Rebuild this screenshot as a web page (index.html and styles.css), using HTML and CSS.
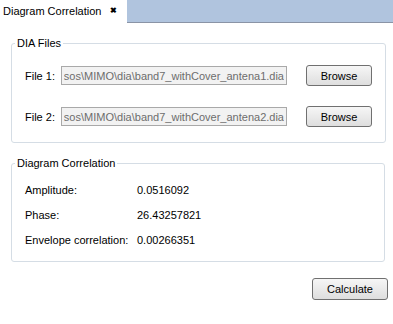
FILE: index.html
```html
<!DOCTYPE html>
<html lang="en">
<head>
    <meta charset="UTF-8">
    <title>Diagram Correlation</title>
    <link rel="stylesheet" href="styles.css">
</head>
<body>
    <div class="tabbar">
        <div class="tab active">
            <span class="tab-title">Diagram Correlation</span>
            <span class="tab-close">&#x2716;</span>
        </div>
        <div class="tab-fill"></div>
    </div>

    <div class="content">
        <fieldset class="group files">
            <legend>DIA Files</legend>
            <div class="file-row">
                <label for="file1">File 1:</label>
                <input type="text" id="file1" value="sos\MIMO\dia\band7_withCover_antena1.dia" disabled>
                <button class="btn">Browse</button>
            </div>
            <div class="file-row">
                <label for="file2">File 2:</label>
                <input type="text" id="file2" value="sos\MIMO\dia\band7_withCover_antena2.dia" disabled>
                <button class="btn">Browse</button>
            </div>
        </fieldset>

        <fieldset class="group results">
            <legend>Diagram Correlation</legend>
            <div class="result-row">
                <span class="result-label">Amplitude:</span>
                <span class="result-value">0.0516092</span>
            </div>
            <div class="result-row">
                <span class="result-label">Phase:</span>
                <span class="result-value">26.43257821</span>
            </div>
            <div class="result-row">
                <span class="result-label">Envelope correlation:</span>
                <span class="result-value">0.00266351</span>
            </div>
        </fieldset>

        <div class="actions">
            <button class="btn calc">Calculate</button>
        </div>
    </div>
</body>
</html>
```

FILE: styles.css
```css
body {
    font-family: 'Liberation Sans', Arial, sans-serif;
    font-size: 11px;
    color: #000;
    background-color: #fff;
    margin: 0;
    padding: 0;
}

.tabbar {
    display: flex;
    height: 23px;
}

.tab {
    width: 127px;
    display: flex;
    align-items: center;
    padding: 0 0 2px 3px;
    box-sizing: border-box;
    background: #fff;
}

.tab-close {
    margin-left: 9px;
    font-size: 8px;
    font-weight: bold;
}

.tab-fill {
    flex: 1;
    background-color: #b0c4de;
    border-bottom: 1px solid #8a94a6;
}

.content {
    padding: 13px 8px 0 11px;
}

.group {
    margin: 0;
    border: 1px solid #d5dde5;
    border-radius: 3px;
    padding: 0 13px;
}

.group legend {
    padding: 0 2px;
    margin-left: -10px;
    line-height: 14px;
}

.files {
    height: 107px;
    box-sizing: border-box;
    padding-top: 15px;
}

.file-row {
    display: grid;
    grid-template-columns: 36px 245px 66px;
    align-items: center;
    height: 21px;
    margin-bottom: 20px;
}

.file-row input {
    height: 19px;
    box-sizing: border-box;
    border: 1px solid #a9a9a9;
    background: #f2f2f2;
    color: #6d6d6d;
    font-family: inherit;
    font-size: 11px;
    padding: 0 2px;
    margin: 0;
    width: 226px;
    direction: rtl;
    text-align: left;
}

.btn {
    height: 21px;
    padding: 0;
    border: 1px solid #707070;
    border-radius: 3px;
    background: linear-gradient(#f6f6f6, #dedede);
    font-family: inherit;
    font-size: 11px;
    color: #000;
    cursor: pointer;
}

.results {
    margin-top: 13px;
    height: 106px;
    box-sizing: border-box;
    padding-top: 14px;
}

.result-row {
    display: grid;
    grid-template-columns: 112px 1fr;
    height: 25px;
    line-height: 13px;
}

.actions {
    display: flex;
    justify-content: flex-end;
    margin: 16px -3px 0 0;
}

.calc {
    width: 76px;
    height: 22px;
}
```
